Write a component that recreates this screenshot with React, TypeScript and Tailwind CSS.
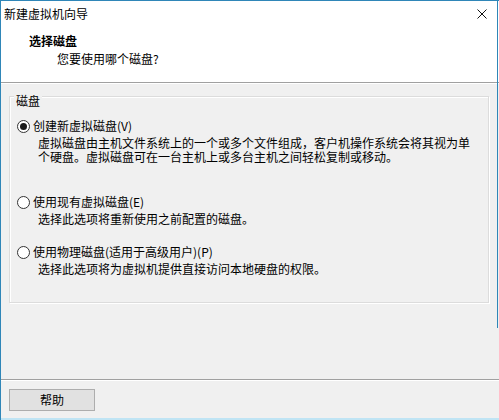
import React from 'react';

const options = [
  {
    key: 'new',
    label: '创建新虚拟磁盘(V)',
    checked: true,
    desc: [
      '虚拟磁盘由主机文件系统上的一个或多个文件组成，客户机操作系统会将其视为单',
      '个硬盘。虚拟磁盘可在一台主机上或多台主机之间轻松复制或移动。',
    ],
    space: '',
  },
  {
    key: 'existing',
    label: '使用现有虚拟磁盘(E)',
    checked: false,
    desc: ['选择此选项将重新使用之前配置的磁盘。'],
    space: 'mt-[30px]',
  },
  {
    key: 'physical',
    label: '使用物理磁盘(适用于高级用户)(P)',
    checked: false,
    desc: ['选择此选项将为虚拟机提供直接访问本地硬盘的权限。'],
    space: 'mt-[18px]',
  },
];

function Radio({ checked }: { checked: boolean }) {
  return (
    <span className="w-[13px] h-[13px] rounded-full border border-[#333333] bg-white flex items-center justify-center shrink-0">
      {checked && <span className="w-[7px] h-[7px] rounded-full bg-[#1a1a1a]" />}
    </span>
  );
}

export default function App() {
  return (
    <div className="relative w-[499px] h-[420px] flex flex-col bg-[#f0f0f0] border-l border-[#2f86b8] text-[12px] text-black font-['Noto_Sans_CJK_SC',sans-serif]">
      {/* window frame, right edge */}
      <div className="absolute right-[1px] top-0 h-[328px] w-px bg-[#2f86b8]" />

      {/* Title bar */}
      <div className="h-[28px] shrink-0 bg-white border-t border-[#2f86b8] flex items-center justify-between pl-[3px] pr-[12px] pb-[1px]">
        <span className="leading-[14px]">新建虚拟机向导</span>
        <svg width="10" height="10" viewBox="0 0 10 10" className="block">
          <path d="M0.5 0.5 L9.5 9.5 M9.5 0.5 L0.5 9.5" stroke="#111" strokeWidth="1" />
        </svg>
      </div>

      {/* Header */}
      <div className="h-[54px] shrink-0 bg-white pl-[28px] pt-[6px]">
        <div className="font-bold leading-[14px]">选择磁盘</div>
        <div className="ml-[28px] mt-[4px] leading-[14px]">您要使用哪个磁盘?</div>
      </div>
      <div className="h-px shrink-0 bg-[#a0a0a0]" />
      <div className="h-px shrink-0 bg-white" />

      {/* Body */}
      <div className="flex-1 px-[8px] pt-[12px]">
        <div className="relative w-[480px] h-[207px] border border-[#dcdcdc] shadow-[inset_1px_1px_0_#ffffff,1px_1px_0_#ffffff] pt-[21px] pl-[7px]">
          <span className="absolute left-[4px] -top-[3px] px-[2px] bg-[#f0f0f0] leading-[14px]">磁盘</span>
          {options.map((o) => (
            <div key={o.key} className={o.space}>
              <div className="flex items-center gap-[3px] h-[16px]">
                <Radio checked={o.checked} />
                <span className="leading-[16px] whitespace-nowrap">{o.label}</span>
              </div>
              <div className="pl-[21px] mt-[2px] leading-[14px] whitespace-nowrap">
                {o.desc.map((line) => (
                  <div key={line}>{line}</div>
                ))}
              </div>
            </div>
          ))}
        </div>
      </div>

      <div className="h-px shrink-0 bg-[#a0a0a0]" />
      <div className="h-px shrink-0 bg-white" />

      {/* Footer */}
      <div className="h-[37px] shrink-0 px-[8px] pt-[8px]">
        <button className="w-[86px] h-[22px] bg-[#e1e1e1] border border-[#adadad] flex items-center justify-center leading-[14px]">
          帮助
        </button>
      </div>
      <div className="h-[2px] shrink-0 bg-[#bfe4f4]" />
    </div>
  );
}
